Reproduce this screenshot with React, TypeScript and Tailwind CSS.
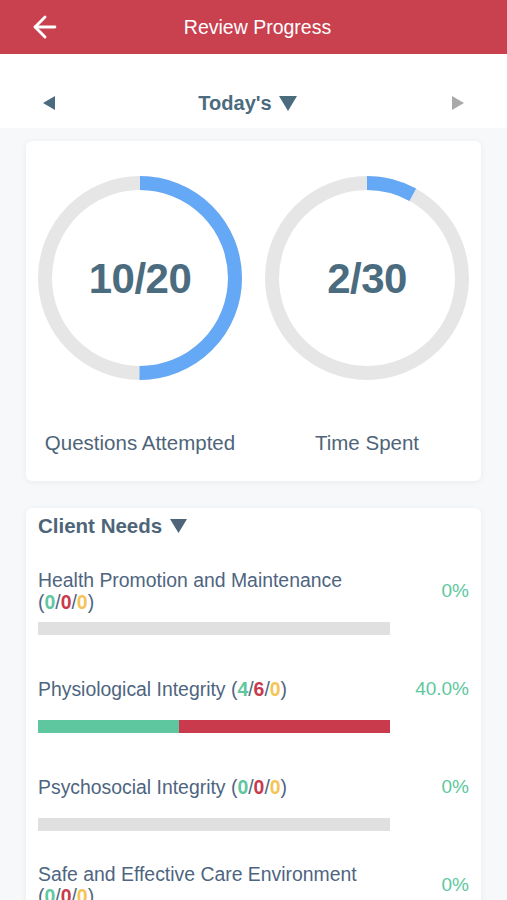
import { ArrowLeft } from "lucide-react";

const FONT = { fontFamily: '"Liberation Sans", Arial, sans-serif' };

function Ring({
  value,
  total,
  arc,
  label,
}: {
  value: number;
  total: number;
  arc?: number;
  label: string;
}) {
  const r = 95;
  const c = 2 * Math.PI * r;
  const frac = arc ?? value / total;
  return (
    <div className="flex flex-col items-center w-[204px]">
      <div className="relative w-[204px] h-[204px]">
        <svg width="204" height="204" viewBox="0 0 204 204" className="-rotate-90">
          <circle cx="102" cy="102" r={r} fill="none" stroke="#e6e6e6" strokeWidth="14" />
          <circle
            cx="102"
            cy="102"
            r={r}
            fill="none"
            stroke="#64a8f6"
            strokeWidth="14"
            strokeDasharray={`${c * frac} ${c}`}
          />
        </svg>
        <div className="absolute inset-0 flex items-center justify-center text-[42px] font-bold text-[#4b6b7e] tracking-[-0.5px]">
          {value}/{total}
        </div>
      </div>
      <div className="mt-[51px] text-[20.5px] text-[#4e6479] leading-6 whitespace-nowrap">{label}</div>
    </div>
  );
}

function Counts({ a, b, c }: { a: number; b: number; c: number }) {
  return (
    <>
      (<span className="text-[#5ec7a0] font-semibold">{a}</span>/
      <span className="text-[#c93a4c] font-semibold">{b}</span>/
      <span className="text-[#f4c555] font-semibold">{c}</span>)
    </>
  );
}

function NeedRow({
  title,
  a,
  b,
  c,
  pct,
}: {
  title: string;
  a: number;
  b: number;
  c: number;
  pct: string;
}) {
  const total = a + b + c;
  return (
    <div className="flex">
      <div className="w-[352px]">
        <div className="min-h-[44px] flex items-center text-[19.4px] leading-[22px] text-[#4e6580]">
          <div>
            {title} <Counts a={a} b={b} c={c} />
          </div>
        </div>
        <div className="mt-[9px] h-[13px] bg-[#e0e0e0] flex">
          {total > 0 && (
            <>
              <div className="bg-[#5ec7a0]" style={{ width: `${(a / total) * 100}%` }} />
              <div className="bg-[#c93a4c]" style={{ width: `${(b / total) * 100}%` }} />
              <div className="bg-[#f4c555]" style={{ width: `${(c / total) * 100}%` }} />
            </>
          )}
        </div>
      </div>
      <div className="flex-1 h-[44px] flex items-center justify-end text-[19px] text-[#5ec7a0]">
        {pct}
      </div>
    </div>
  );
}

export default function App() {
  return (
    <div className="w-[507px] min-h-[900px] bg-[#f7f8fa]" style={FONT}>
      <div className="h-[54px] bg-[#c9404f] flex items-center relative">
        <ArrowLeft className="absolute left-[28px] text-white" size={34} strokeWidth={2} />
        <div className="flex-1 text-center text-white text-[19.5px] pl-[8px] pt-[2px]">Review Progress</div>
      </div>

      <div className="h-[74px] bg-white flex items-center justify-between px-[42px] pt-[24px]">
        <svg width="14" height="16" viewBox="0 0 14 16">
          <path d="M13 1 L1 8 L13 15 Z" fill="#4b6b7e" />
        </svg>
        <div className="flex items-center gap-[7px] text-[20px] font-bold text-[#4b6b7e] mr-[12px]">
          Today's
          <svg width="18" height="15" viewBox="0 0 18 15">
            <path d="M0 0 L18 0 L9 15 Z" fill="#4b6b7e" />
          </svg>
        </div>
        <svg width="14" height="16" viewBox="0 0 14 16">
          <path d="M1 1 L13 8 L1 15 Z" fill="#a9a9a9" />
        </svg>
      </div>

      <div className="px-[26px] pt-[13px] flex flex-col gap-[27px]">
        <div className="bg-white rounded-[6px] shadow-[0_1px_6px_rgba(0,0,0,0.06)] h-[340px] pt-[35px] px-[12px] flex justify-between">
          <Ring value={10} total={20} label="Questions Attempted" />
          <Ring value={2} total={30} arc={0.08} label="Time Spent" />
        </div>

        <div className="bg-white rounded-[6px] shadow-[0_1px_6px_rgba(0,0,0,0.06)] px-[12px] pt-[6px] pb-[30px]">
          <div className="flex items-center gap-[8px] text-[20.5px] font-bold text-[#4e6579] h-[24px]">
            Client Needs
            <svg width="17" height="14" viewBox="0 0 17 14">
              <path d="M0 0 L17 0 L8.5 14 Z" fill="#4e6579" />
            </svg>
          </div>
          <div className="mt-[31px] flex flex-col gap-[32px]">
            <NeedRow title="Health Promotion and Maintenance" a={0} b={0} c={0} pct="0%" />
            <NeedRow title="Physiological Integrity" a={4} b={6} c={0} pct="40.0%" />
            <NeedRow title="Psychosocial Integrity" a={0} b={0} c={0} pct="0%" />
            <NeedRow title="Safe and Effective Care Environment" a={0} b={0} c={0} pct="0%" />
          </div>
        </div>
      </div>
    </div>
  );
}
